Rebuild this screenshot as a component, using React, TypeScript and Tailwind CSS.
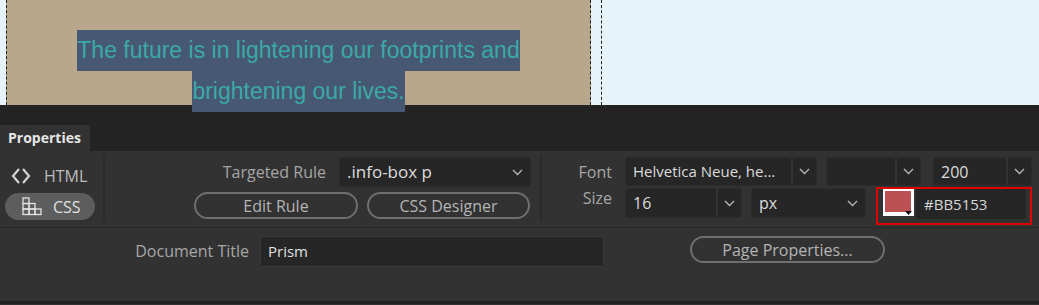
import React from 'react';

// Dreamweaver-style property inspector below a design view canvas

function Chevron() {
  return (
    <svg width="11" height="7" viewBox="0 0 11 7" fill="none">
      <polyline points="1,1 5.5,5.5 10,1" stroke="#b4b4b4" strokeWidth="1.4" />
    </svg>
  );
}

interface SelectProps {
  value: string;
  width: string;
  split?: boolean;
  textSize?: string;
}

function Select({ value, width, split, textSize = 'text-[16px]' }: SelectProps) {
  return (
    <div
      className={`${width} ${textSize} flex h-full rounded-[3px] border border-[#2c2c2c] bg-[#262626] text-[#dcdcdc]`}
    >
      <div className="flex flex-1 items-center overflow-hidden whitespace-nowrap pl-[7px]">{value}</div>
      <div
        className={`flex w-[25px] items-center justify-center ${split ? 'border-l-2 border-[#333333]' : ''}`}
      >
        <Chevron />
      </div>
    </div>
  );
}

function PillButton({ label, width }: { label: string; width: string }) {
  return (
    <button
      className={`${width} flex h-[27px] items-center justify-center rounded-full border-2 border-[#6f6f6f] text-[16px] text-[#b4b4b4]`}
    >
      {label}
    </button>
  );
}

function CodeIcon() {
  return (
    <svg width="20" height="18" viewBox="0 0 20 18" fill="none">
      <polyline points="8,2 2,9 8,16" stroke="#d4d4d4" strokeWidth="2.2" />
      <polyline points="12,2 18,9 12,16" stroke="#d4d4d4" strokeWidth="2.2" />
    </svg>
  );
}

function CssIcon() {
  return (
    <svg width="20" height="19" viewBox="0 0 20 19" fill="none" stroke="#e2e2e2" strokeWidth="1.3">
      <rect x="1" y="1" width="6" height="5.5" />
      <rect x="1" y="6.5" width="6" height="5.5" />
      <rect x="7" y="6.5" width="6" height="5.5" />
      <rect x="1" y="12" width="6" height="5.5" />
      <rect x="7" y="12" width="6" height="5.5" />
      <rect x="13" y="12" width="6" height="5.5" />
    </svg>
  );
}

export default function App() {
  return (
    <div className="h-[305px] w-[1039px] overflow-hidden bg-[#323232] font-['Open_Sans',sans-serif]">
      {/* Design view */}
      <div className="flex h-[105px] bg-[#e6f3f8]">
        <div className="ml-[6px] w-[585px] border-x border-dashed border-[#1e1e1e] bg-[#b8a78c] pt-[30px] text-center font-['Liberation_Sans',sans-serif] text-[23px] leading-[41px] text-[#3ba9a8]">
          <div>
            <span className="inline-block bg-[#475872]">The future is in lightening our footprints and</span>
          </div>
          <div>
            <span className="inline-block bg-[#475872]">brightening our lives.</span>
          </div>
        </div>
        <div className="ml-[10px] border-l border-dashed border-[#1e1e1e]" />
      </div>

      {/* Panel tab strip */}
      <div className="flex h-[46px] items-end bg-[#232323]">
        <div className="h-[26px] w-[90px] bg-[#323232] pl-[8px] text-[14px] font-bold leading-[26px] text-[#e6e6e6]">
          Properties
        </div>
      </div>

      {/* Upper section */}
      <div className="flex h-[77px] border-b border-[#262626]">
        <div className="w-[103px] pt-[14px]">
          <div className="flex h-[22px] items-center gap-[13px] pl-[11px] text-[16px] text-[#bcbcbc]">
            <CodeIcon />
            <span>HTML</span>
          </div>
          <div className="ml-[5px] mt-[6px] flex h-[27px] w-[90px] items-center gap-[11px] rounded-full bg-[#5d5d5d] pl-[17px] text-[16px] text-[#e0e0e0]">
            <CssIcon />
            <span>CSS</span>
          </div>
        </div>
        <div className="mt-[4px] h-[66px] w-[2px] bg-[#2a2a2a]" />

        <div className="w-[435px] pt-[6px]">
          <div className="flex h-[30px] items-center">
            <div className="w-[221px] text-right text-[16px] text-[#a6a6a6]">Targeted Rule</div>
            <div className="ml-[13px] h-[30px]">
              <Select value=".info-box p" width="w-[192px]" textSize="text-[17px]" />
            </div>
          </div>
          <div className="mt-[5px] flex gap-[9px] pl-[89px]">
            <PillButton label="Edit Rule" width="w-[164px]" />
            <PillButton label="CSS Designer" width="w-[163px]" />
          </div>
        </div>
        <div className="mt-[4px] h-[66px] w-[2px] bg-[#2a2a2a]" />

        <div className="flex-1 pt-[6px]">
          <div className="flex h-[29px] items-center">
            <div className="w-[70px] text-right text-[16px] text-[#a6a6a6]">Font</div>
            <div className="ml-[13px] h-[29px]">
              <Select value="Helvetica Neue, he..." width="w-[192px]" textSize="text-[15px]" split />
            </div>
            <div className="ml-[9px] h-[29px]">
              <Select value="" width="w-[95px]" split />
            </div>
            <div className="ml-[12px] h-[29px]">
              <Select value="200" width="w-[99px]" split />
            </div>
          </div>
          <div className="mt-[2px] flex items-start">
            <div className="w-[70px] text-right text-[16px] leading-[20px] text-[#a6a6a6]">Size</div>
            <div className="ml-[13px] h-[30px]">
              <Select value="16" width="w-[117px]" split />
            </div>
            <div className="ml-[9px] h-[30px]">
              <Select value="px" width="w-[115px]" />
            </div>
            <div className="-mt-[1px] ml-[10px] flex h-[38px] w-[156px] border-2 border-[#e00000] pl-[5px]">
              <div className="relative h-[27px] w-[31px] bg-white">
                <div className="ml-[2px] mt-[2px] h-[21px] w-[26px] bg-[#bb5153]" />
                <svg className="absolute bottom-[1px] right-[2px]" width="7" height="4" viewBox="0 0 7 4">
                  <polygon points="0,0 7,0 3.5,4" fill="#111111" />
                </svg>
              </div>
              <div className="ml-[2px] flex h-[30px] w-[110px] items-center rounded-[3px] bg-[#262626] pl-[8px] text-[15px] text-[#d8d8d8]">
                #BB5153
              </div>
            </div>
          </div>
        </div>
      </div>

      {/* Lower section */}
      <div className="flex h-[73px] pt-[8px]">
        <div className="w-[249px] text-right text-[16px] leading-[31px] text-[#a6a6a6]">Document Title</div>
        <div className="ml-[11px] flex h-[31px] w-[344px] items-center rounded-[3px] border border-[#3a3a3a] bg-[#262626] pl-[7px] text-[15px] text-[#e0e0e0]">
          Prism
        </div>
        <div className="ml-[86px]">
          <PillButton label="Page Properties..." width="w-[195px]" />
        </div>
      </div>
      <div className="h-[3px] bg-[#232323]" />
    </div>
  );
}
